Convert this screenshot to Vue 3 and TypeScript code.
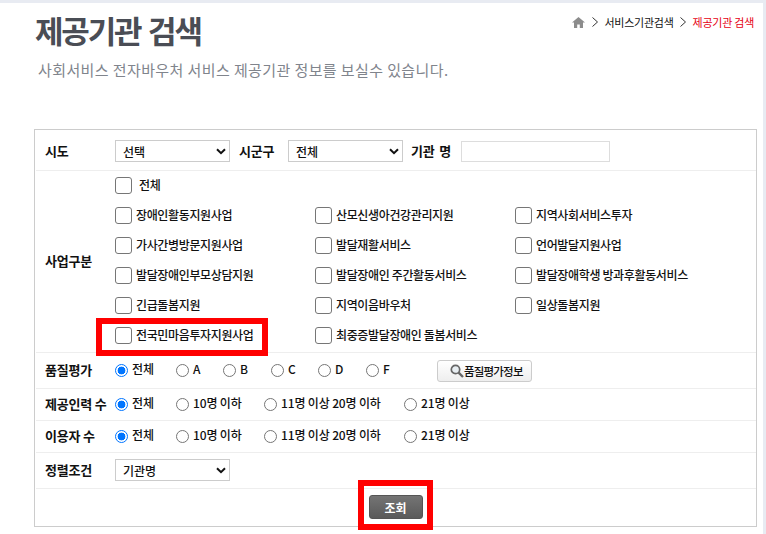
<script setup lang="ts">
import { ref } from 'vue'

const services: string[][] = [
  ['장애인활동지원사업', '산모신생아건강관리지원', '지역사회서비스투자'],
  ['가사간병방문지원사업', '발달재활서비스', '언어발달지원사업'],
  ['발달장애인부모상담지원', '발달장애인 주간활동서비스', '발달장애학생 방과후활동서비스'],
  ['긴급돌봄지원', '지역이음바우처', '일상돌봄지원'],
  ['전국민마음투자지원사업', '최중증발달장애인 돌봄서비스']
]

const grades = [
  { label: '전체', width: 61 },
  { label: 'A', width: 47 },
  { label: 'B', width: 48 },
  { label: 'C', width: 47 },
  { label: 'D', width: 48 },
  { label: 'F', width: 71 }
]

const counts = [
  { label: '전체', width: 61 },
  { label: '10명 이하', width: 88 },
  { label: '11명 이상 20명 이하', width: 140 },
  { label: '21명 이상', width: 80 }
]

const grade = ref('전체')
const staff = ref('전체')
const users = ref('전체')
</script>

<template>
  <div class="page">
    <header class="head">
      <div class="title-row">
        <h1>제공기관 검색</h1>
        <nav class="crumbs">
          <svg class="home" width="13" height="11" viewBox="0 0 13 11">
            <path d="M6.5 0 L13 5.6 L11 5.6 L11 11 L7.8 11 L7.8 7.4 L5.2 7.4 L5.2 11 L2 11 L2 5.6 L0 5.6 Z" fill="#8c8c8c" />
          </svg>
          <svg class="sep" width="6" height="10" viewBox="0 0 6 10">
            <path d="M0.5 0.5 L5.5 5 L0.5 9.5" fill="none" stroke="#333" />
          </svg>
          <span>서비스기관검색</span>
          <svg class="sep" width="6" height="10" viewBox="0 0 6 10">
            <path d="M0.5 0.5 L5.5 5 L0.5 9.5" fill="none" stroke="#333" />
          </svg>
          <span class="current">제공기관 검색</span>
        </nav>
      </div>
      <p class="desc">사회서비스 전자바우처 서비스 제공기관 정보를 보실수 있습니다.</p>
    </header>

    <form class="search" @submit.prevent>
      <div class="row row-top">
        <div class="label">시도</div>
        <div class="field">
          <div class="select-wrap">
            <select><option>선택</option></select>
            <svg width="10" height="7" viewBox="0 0 10 7"><path d="M1 1.2 L5 5.2 L9 1.2" fill="none" stroke="#111" stroke-width="2" /></svg>
          </div>
          <span class="inline-label sigungu">시군구</span>
          <div class="select-wrap">
            <select><option>전체</option></select>
            <svg width="10" height="7" viewBox="0 0 10 7"><path d="M1 1.2 L5 5.2 L9 1.2" fill="none" stroke="#111" stroke-width="2" /></svg>
          </div>
          <span class="inline-label gigwan">기관 명</span>
          <input class="name-input" type="text" />
        </div>
      </div>

      <div class="row row-service">
        <div class="label">사업구분</div>
        <div class="field services">
          <label class="check all"><input type="checkbox" /><span>전체</span></label>
          <div v-for="(line, i) in services" :key="i" class="check-line">
            <label v-for="name in line" :key="name" class="check"><input type="checkbox" /><span>{{ name }}</span></label>
          </div>
        </div>
      </div>

      <div class="row row-grade">
        <div class="label">품질평가</div>
        <div class="field">
          <label v-for="g in grades" :key="g.label" class="radio" :style="{ width: g.width + 'px' }">
            <input v-model="grade" type="radio" name="grade" :value="g.label" /><span>{{ g.label }}</span>
          </label>
          <button type="button" class="info-btn">
            <svg width="14" height="14" viewBox="0 0 14 14">
              <circle cx="5.5" cy="5.5" r="4.2" fill="#e8eef2" stroke="#666" stroke-width="1.7" />
              <path d="M8.6 8.6 L13 13" stroke="#666" stroke-width="2.4" />
            </svg>품질평가정보
          </button>
        </div>
      </div>

      <div class="row row-count">
        <div class="label">제공인력 수</div>
        <div class="field">
          <label v-for="c in counts" :key="c.label" class="radio" :style="{ width: c.width + 'px' }">
            <input v-model="staff" type="radio" name="staff" :value="c.label" /><span>{{ c.label }}</span>
          </label>
        </div>
      </div>

      <div class="row row-count">
        <div class="label">이용자 수</div>
        <div class="field">
          <label v-for="c in counts" :key="c.label" class="radio" :style="{ width: c.width + 'px' }">
            <input v-model="users" type="radio" name="users" :value="c.label" /><span>{{ c.label }}</span>
          </label>
        </div>
      </div>

      <div class="row row-sort">
        <div class="label">정렬조건</div>
        <div class="field">
          <div class="select-wrap">
            <select><option>기관명</option></select>
            <svg width="10" height="7" viewBox="0 0 10 7"><path d="M1 1.2 L5 5.2 L9 1.2" fill="none" stroke="#111" stroke-width="2" /></svg>
          </div>
        </div>
      </div>

      <div class="actions">
        <button type="submit" class="submit">조회</button>
      </div>
    </form>

    <!-- 안내용 빨간 강조 박스 -->
    <div class="mark mark-service"></div>
    <div class="mark mark-submit"></div>
  </div>
</template>

<style scoped>
.page {
  position: relative;
  box-sizing: border-box;
  width: 766px;
  height: 534px;
  overflow: hidden;
  background: #fff;
  border-top: 3px solid #e8ebf2;
  border-right: 3px solid #e8ebf2;
  font-family: "Noto Sans CJK KR", "Noto Sans", sans-serif;
  color: #111;
}

.head {
  padding: 0 9px 0 35px;
}

.title-row {
  display: flex;
  justify-content: space-between;
  align-items: flex-start;
}

h1 {
  margin: 0;
  padding-top: 6px;
  font-size: 31px;
  line-height: 42px;
  font-weight: 700;
  letter-spacing: -2.2px;
  word-spacing: 3px;
  color: #4a4d55;
}

.crumbs {
  display: flex;
  align-items: center;
  gap: 6.5px;
  padding-top: 11px;
  font-size: 11px;
  line-height: 16px;
  letter-spacing: -0.25px;
  color: #111;
}

.current {
  color: #e60012;
}

.desc {
  margin: 9px 0 0 3px;
  font-size: 15px;
  line-height: 20px;
  letter-spacing: 0.4px;
  color: #80848c;
}

.search {
  box-sizing: border-box;
  width: 723px;
  height: 398px;
  margin: 49px 0 0 34px;
  border: 1px solid #ccc;
}

.row {
  display: flex;
  align-items: center;
  box-sizing: border-box;
  margin-left: 1px;
  border-bottom: 1px solid #eee;
}

.row-top {
  height: 41px;
  padding-top: 2px;
}

.row-service {
  height: 182px;
}

.row-grade {
  height: 36px;
}

.row-count {
  height: 32px;
}

.row-sort {
  height: 36px;
  padding-bottom: 1px;
}

.label {
  flex: none;
  box-sizing: border-box;
  width: 79px;
  margin-top: -2px;
  padding-left: 9px;
  font-size: 13px;
  font-weight: 700;
  letter-spacing: -0.2px;
  white-space: nowrap;
}

.field {
  display: flex;
  align-items: center;
  font-size: 12px;
  font-weight: 500;
}

.select-wrap {
  position: relative;
  width: 115px;
  height: 22px;
}

.select-wrap select {
  appearance: none;
  box-sizing: border-box;
  display: block;
  width: 100%;
  height: 100%;
  padding: 0 0 0 7px;
  border: 1px solid #ccc;
  border-radius: 0;
  background: #fff;
  font: 500 12px "Noto Sans CJK KR", sans-serif;
  color: #111;
}

.select-wrap svg {
  position: absolute;
  top: 8px;
  right: 4px;
  pointer-events: none;
}

.inline-label {
  margin-top: -2px;
  font-size: 13px;
  font-weight: 700;
  letter-spacing: -0.2px;
  word-spacing: 2px;
  white-space: nowrap;
}

.sigungu {
  width: 58px;
  padding-left: 9px;
  box-sizing: border-box;
}

.gigwan {
  width: 58px;
  padding-left: 8px;
  box-sizing: border-box;
}

.name-input {
  box-sizing: border-box;
  width: 149px;
  height: 21px;
  border: 1px solid #ddd;
  background: #fff;
}

.services {
  display: flex;
  flex-direction: column;
  align-items: flex-start;
  gap: 13px;
  align-self: flex-start;
  padding-top: 6px;
}

.check-line {
  display: flex;
  height: 17px;
}

.check {
  display: flex;
  align-items: center;
  gap: 4px;
  width: 200px;
  height: 17px;
  line-height: 17px;
  letter-spacing: -0.36px;
  white-space: nowrap;
}

.check span {
  margin-top: -2px;
}

.check.all {
  gap: 7px;
}

.check input {
  appearance: none;
  flex: none;
  box-sizing: border-box;
  width: 17px;
  height: 17px;
  margin: 0;
  border: 1px solid #767676;
  border-radius: 3px;
  background: #fff;
}

.radio {
  display: flex;
  align-items: center;
  gap: 4px;
  flex: none;
  height: 20px;
  line-height: 16px;
  letter-spacing: -0.15px;
  white-space: nowrap;
}

.radio span {
  margin-top: -4px;
}

.radio input {
  appearance: none;
  flex: none;
  box-sizing: border-box;
  width: 13px;
  height: 13px;
  margin: 0;
  border: 1px solid #767676;
  border-radius: 50%;
  background: #fff;
}

.radio input:checked {
  border-color: #0075ff;
  background: radial-gradient(circle, #0075ff 0 3.6px, #fff 4.2px);
}

.info-btn {
  display: flex;
  align-items: center;
  gap: 0;
  box-sizing: border-box;
  width: 95px;
  height: 22px;
  padding: 0 0 0 12px;
  border: 1px solid #ccc;
  border-radius: 3px;
  background: linear-gradient(#fff, #eee);
  font: 500 11.5px "Noto Sans CJK KR", sans-serif;
  letter-spacing: -0.8px;
  color: #111;
}

.actions {
  display: flex;
  justify-content: center;
  padding-top: 6px;
}

.submit {
  width: 54px;
  height: 24px;
  padding: 0;
  border: 1px solid #555;
  border-radius: 3px;
  background: linear-gradient(#747474, #5a5a5a);
  font: 700 12px "Noto Sans CJK KR", sans-serif;
  color: #fff;
}

.mark {
  position: absolute;
  box-sizing: border-box;
  border: 6px solid #f00;
}

.mark-service {
  left: 96px;
  top: 315px;
  width: 172px;
  height: 38px;
}

.mark-submit {
  left: 358px;
  top: 477px;
  width: 75px;
  height: 50px;
}
</style>

<style>
html, body {
  margin: 0;
  background: #fff;
}
</style>
